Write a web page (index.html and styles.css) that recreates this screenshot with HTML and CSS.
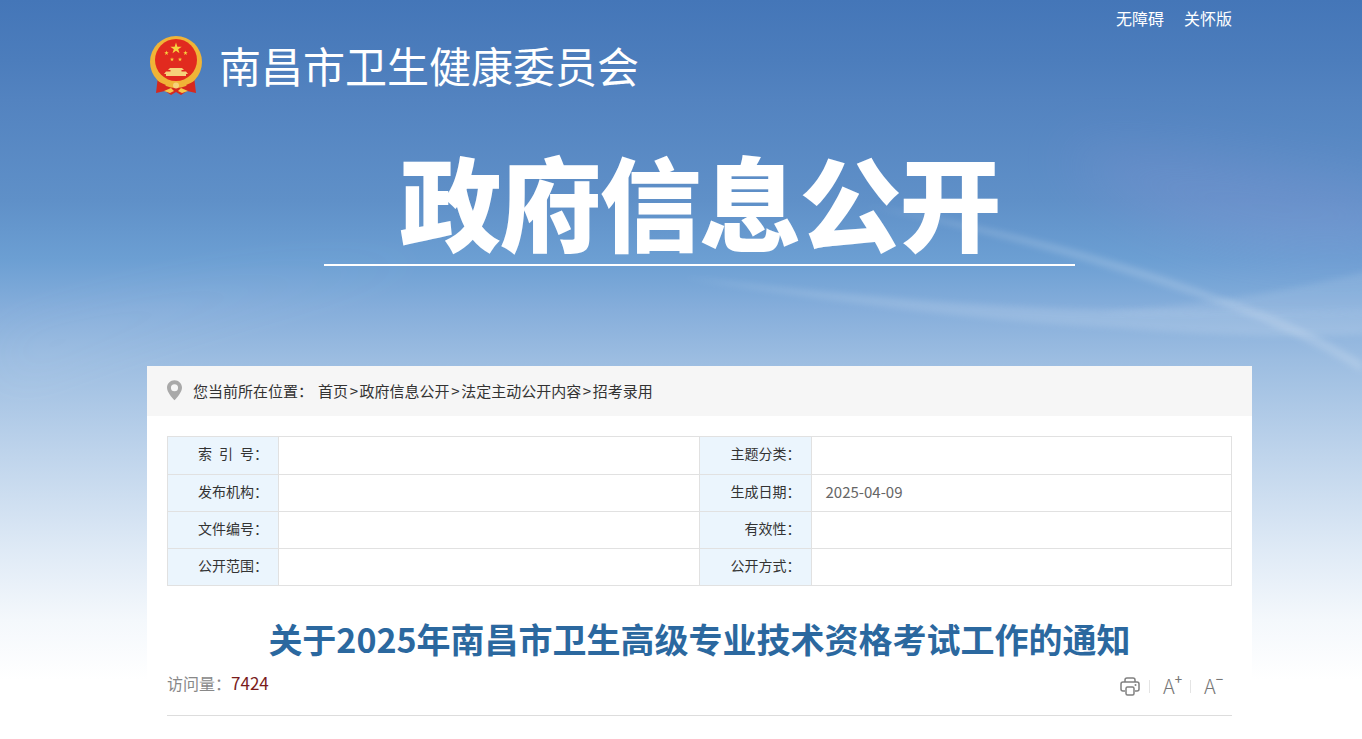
FILE: index.html
```html
<!DOCTYPE html>
<html lang="zh-CN">
<head>
    <meta charset="UTF-8">
    <meta name="viewport" content="width=device-width, initial-scale=1.0">
    <title>关于2025年南昌市卫生高级专业技术资格考试工作的通知</title>
    <link rel="stylesheet" href="styles.css">
</head>
<body>
    <svg class="sky-waves" viewBox="0 0 1362 700" preserveAspectRatio="none" aria-hidden="true">
        <defs>
            <filter id="soft" x="-10%" y="-50%" width="120%" height="200%"><feGaussianBlur stdDeviation="3"/></filter>
            <filter id="haze" x="-30%" y="-50%" width="160%" height="200%"><feGaussianBlur stdDeviation="28"/></filter>
        </defs>
        <path d="M1060 150 C1160 150 1280 170 1400 190 L1400 250 C1280 260 1150 240 1060 150 Z" fill="#9a98d8" opacity=".22" filter="url(#haze)"/>
        <path d="M0 340 C140 295 280 265 480 255 C300 285 130 330 0 385 Z" fill="#fff" opacity=".05" filter="url(#haze)"/>
        <path d="M860 205 C1000 232 1170 285 1240 312 C1290 332 1330 352 1362 372 L1362 362 C1320 335 1270 312 1215 295 C1130 262 1000 226 860 205 Z" fill="#fff" opacity=".16" filter="url(#soft)"/>
        <path d="M680 277 C820 300 980 322 1120 328 C1210 336 1290 338 1380 334 L1380 310 C1290 314 1200 312 1120 310 C980 308 820 292 680 277 Z" fill="#fff" opacity=".13" filter="url(#soft)"/>
        <path d="M1100 312 C1200 305 1290 292 1380 268 L1380 312 C1280 315 1190 316 1100 312 Z" fill="#fff" opacity=".1" filter="url(#soft)"/>
    </svg>

    <div class="page">
        <header class="site-header">
            <div class="top-links">
                <a href="#">无障碍</a>
                <a href="#">关怀版</a>
            </div>
            <div class="logo-row">
                <svg class="emblem" viewBox="0 0 54 60" aria-hidden="true">
                    <defs>
                        <polygon id="star" points="0,-1 .224,-.309 .951,-.309 .363,.118 .588,.809 0,.382 -.588,.809 -.363,.118 -.951,-.309 -.224,-.309"/>
                    </defs>
                    <!-- ribbon sits behind the ring -->
                    <path d="M9 40 L45 40 L47 57 L38 55 L32 59 L27 56 L22 59 L16 55 L7 57 Z" fill="#d6281e"/>
                    <circle cx="27" cy="26" r="26" fill="#f0b437"/>
                    <circle cx="27" cy="24" r="21" fill="#e12a1f"/>
                    <use href="#star" transform="translate(27 12.5) scale(6)" fill="#f7d33f"/>
                    <use href="#star" transform="translate(17.5 17) scale(2.4)" fill="#f7d33f"/>
                    <use href="#star" transform="translate(36.5 17) scale(2.4)" fill="#f7d33f"/>
                    <use href="#star" transform="translate(23 23.5) scale(2.2)" fill="#f7d33f"/>
                    <use href="#star" transform="translate(31 23.5) scale(2.2)" fill="#f7d33f"/>
                    <path d="M21 32 H33 L35 34 H32.5 V35.5 H37 L39 38 H37 V40 H17 V38 H15 L17 35.5 H21.5 V34 H19 Z" fill="#f6d27a"/>
                    <path d="M8 37 C13 44 20 46 27 46 C34 46 41 44 46 37 L47 41 C41 49 34 51 27 51 C20 51 13 49 7 41 Z" fill="#f0b437"/>
                    <path d="M10 46 L17 49 L14 52 L9 50 Z M44 46 L37 49 L40 52 L45 50 Z" fill="#d6281e"/>
                    <path d="M15 55 L22 52 L25 55 L21 57 Z M39 55 L32 52 L29 55 L33 57 Z" fill="#f6c94c"/>
                    <circle cx="27" cy="49.5" r="3" fill="#f6d27a"/>
                </svg>
                <h1 class="site-name">南昌市卫生健康委员会</h1>
            </div>
            <div class="section-title">
                <span>政府信息公开</span>
            </div>
        </header>

        <main class="panel">
            <div class="crumbs">
                <svg class="pin" viewBox="0 0 16 22" aria-hidden="true">
                    <path fill-rule="evenodd" d="M8 0 C3.6 0 0 3.5 0 7.9 C0 12.6 4.6 18 8 21.5 C11.4 18 16 12.6 16 7.9 C16 3.5 12.4 0 8 0 Z M8 4.2 A3.8 3.8 0 1 1 8 11.8 A3.8 3.8 0 1 1 8 4.2 Z" fill="#a9a9a9"/>
                </svg>
                <span class="crumbs-label">您当前所在位置：</span>
                <a href="#">首页</a><i>&gt;</i><a href="#">政府信息公开</a><i>&gt;</i><a href="#">法定主动公开内容</a><i>&gt;</i><a href="#">招考录用</a>
            </div>

            <div class="article">
                <table class="info-table">
                    <colgroup>
                        <col class="col-label"><col class="col-value"><col class="col-label-wide"><col class="col-value">
                    </colgroup>
                    <tr class="first-row">
                        <th>索&ensp;引&ensp;号：</th><td></td>
                        <th>主题分类：</th><td></td>
                    </tr>
                    <tr>
                        <th>发布机构：</th><td></td>
                        <th>生成日期：</th><td>2025-04-09</td>
                    </tr>
                    <tr>
                        <th>文件编号：</th><td></td>
                        <th>有效性：</th><td></td>
                    </tr>
                    <tr>
                        <th>公开范围：</th><td></td>
                        <th>公开方式：</th><td></td>
                    </tr>
                </table>

                <h2 class="article-title">关于2025年南昌市卫生高级专业技术资格考试工作的通知</h2>

                <div class="article-meta">
                    <div class="visits">访问量：<span>7424</span></div>
                    <div class="tools">
                        <svg class="print-icon" viewBox="0 0 20 19" aria-hidden="true">
                            <path d="M5 5 V3 Q5 1 7 1 H13 Q15 1 15 3 V5" fill="none" stroke="#808080" stroke-width="1.5"/>
                            <path d="M5 14 H3 Q1 14 1 12 V7 Q1 5 3 5 H17 Q19 5 19 7 V12 Q19 14 17 14 H15" fill="none" stroke="#808080" stroke-width="1.5"/>
                            <rect x="6" y="10" width="8" height="8" rx="1.5" fill="none" stroke="#808080" stroke-width="1.5"/>
                            <circle cx="15.5" cy="8" r="1" fill="#808080"/>
                        </svg>
                        <b class="tool-sep"></b>
                        <span class="font-tool">A<sup>+</sup></span>
                        <b class="tool-sep"></b>
                        <span class="font-tool">A<sup>−</sup></span>
                    </div>
                </div>
            </div>
        </main>
    </div>
</body>
</html>
```

FILE: styles.css
```css
html, body {
    height: 100%;
}
body {
    margin: 0;
    overflow: hidden;
    font-family: "Noto Sans CJK SC", "Noto Sans", sans-serif;
    color: #333;
    background: #fff linear-gradient(180deg, #4476b8 0, #4c7dbc 60px, #5383c0 100px, #5f90c8 200px, #6c9fd3 260px, #86aedb 310px, #9cbde1 360px, #bdd3eb 450px, #dfeaf6 550px, #f4f8fc 620px, #fff 680px) no-repeat;
}
a {
    color: inherit;
    text-decoration: none;
}

/* backdrop streaks behind the header */
.sky-waves {
    position: absolute;
    top: 0;
    left: 0;
    width: 100%;
    height: 700px;
}

.page {
    position: relative;
    width: 1105px;
    margin-left: 147px;
}

/* header */
.site-header {
    height: 366px;
    color: #fff;
}
.top-links {
    display: flex;
    justify-content: flex-end;
    gap: 20px;
    height: 37px;
    padding-right: 20px;
    font-size: 16px;
    line-height: 37px;
}
.logo-row {
    display: flex;
    align-items: center;
    gap: 16px;
    height: 58px;
    padding-left: 2px;
}
.emblem {
    width: 54px;
    height: 60px;
}
.site-name {
    margin: 0;
    padding-bottom: 2px;
    font-size: 42px;
    font-weight: 400;
    line-height: 56px;
}
.section-title {
    display: flex;
    justify-content: center;
    margin-top: 45px;
}
.section-title span {
    width: 751px;
    height: 124px;
    border-bottom: 2px solid #fff;
    font-size: 102px;
    font-weight: 900;
    letter-spacing: -2px;
    line-height: 120px;
    text-align: center;
}

/* white panel */
.panel {
    height: 373px;
    background: #fff;
}
.crumbs {
    display: flex;
    align-items: center;
    height: 48px;
    padding: 0 0 2px 20px;
    background: #f6f6f6;
    font-size: 15px;
}
.pin {
    width: 15px;
    height: 21px;
    margin-right: 11px;
}
.crumbs-label {
    width: 125px;
}
.crumbs i {
    width: 11.6px;
    font-style: normal;
    text-align: center;
}

.article {
    padding: 20px 20px 0;
}
.info-table {
    width: 1065px;
    table-layout: fixed;
    border-collapse: collapse;
    font-size: 14px;
}
.col-label {
    width: 111px;
}
.col-label-wide {
    width: 112px;
}
.info-table th,
.info-table td {
    height: 32px;
    padding: 0 0 4px;
    border: 1px solid #e1e1e1;
}
.first-row th,
.first-row td {
    height: 32px;
    padding-bottom: 5px;
}
.info-table th {
    padding-right: 10px;
    background: #ebf5fd;
    font-weight: 400;
    text-align: right;
}
.info-table td {
    padding-left: 14px;
    color: #666;
    font-size: 15px;
}

.article-title {
    margin: 29px 0 0;
    color: #2b689f;
    font-size: 34px;
    font-weight: 700;
    line-height: 48px;
    text-align: center;
}
.article-meta {
    display: flex;
    justify-content: space-between;
    height: 47px;
    margin-top: 5px;
    border-bottom: 1px solid #ddd;
}
.visits {
    color: #888;
    font-size: 16px;
    line-height: 30px;
}
.visits span {
    color: #7a1c1c;
    font-size: 17px;
}
.tools {
    display: flex;
    align-items: center;
    gap: 9px;
    height: 26px;
    margin-top: 5px;
    padding-right: 10px;
}
.print-icon {
    width: 20px;
    height: 19px;
}
.tool-sep {
    width: 1px;
    height: 13px;
    background: #e4e4e4;
}
.font-tool {
    display: flex;
    width: 18px;
    margin-left: 4px;
    color: #777;
    font-size: 20px;
    font-weight: 300;
    line-height: 26px;
}
.font-tool sup {
    margin-top: -4px;
    font-size: 13px;
    font-weight: 500;
    line-height: 20px;
}
```
